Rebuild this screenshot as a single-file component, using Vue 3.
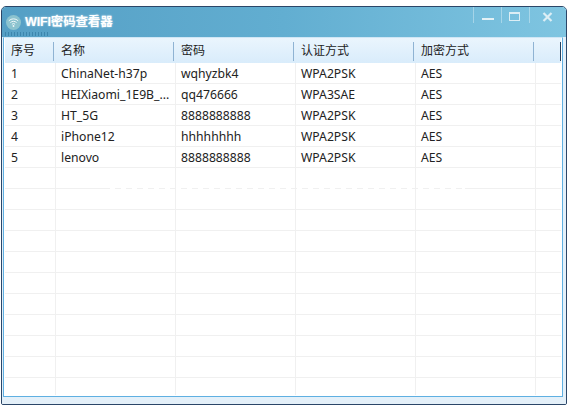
<template>
  <div class="win">
    <div class="title-bar">
      <svg class="app-icon" width="15" height="15" viewBox="0 0 15 15">
        <circle cx="7.5" cy="7.5" r="7.5" fill="#8cc3cf" />
        <path d="M2.8 5.8a6.6 6.6 0 0 1 9.4 0M4.4 7.6a4.4 4.4 0 0 1 6.2 0M5.9 9.3a2.2 2.2 0 0 1 3.2 0" fill="none" stroke="#eef7f8" stroke-width="1" />
        <circle cx="7.5" cy="11" r="0.9" fill="#eef7f8" />
      </svg>
      <span class="title">WIFI密码查看器</span>
      <div class="dots"></div>
      <div class="controls">
        <div class="ctl"><span class="min-bar"></span></div>
        <div class="ctl"><span class="max-box"></span></div>
        <div class="ctl last">
          <svg width="11" height="10" viewBox="0 0 11 10">
            <path d="M1.5 1l8 8M9.5 1l-8 8" stroke="#dceef5" stroke-width="2.2" fill="none" />
          </svg>
        </div>
      </div>
    </div>
    <div class="frame">
      <div class="panel">
        <div class="grid-row head">
          <div v-for="c in columns" :key="c" class="head-cell">{{ c }}</div>
          <div class="head-cell"></div>
          <span class="head-end"></span>
        </div>
        <div class="list">
          <div v-for="(r, i) in rows" :key="i" class="grid-row item">
            <div class="cell">{{ r[0] }}</div>
            <div class="cell">{{ r[1] }}</div>
            <div class="cell">{{ r[2] }}</div>
            <div class="cell">{{ r[3] }}</div>
            <div class="cell">{{ r[4] }}</div>
            <div class="cell"></div>
          </div>
          <div class="dash"></div>
        </div>
      </div>
    </div>
  </div>
</template>

<script setup>
const columns = ['序号', '名称', '密码', '认证方式', '加密方式']

const data = [
  ['1', 'ChinaNet-h37p', 'wqhyzbk4', 'WPA2PSK', 'AES'],
  ['2', 'HEIXiaomi_1E9B_...', 'qq476666', 'WPA3SAE', 'AES'],
  ['3', 'HT_5G', '8888888888', 'WPA2PSK', 'AES'],
  ['4', 'iPhone12', 'hhhhhhhh', 'WPA2PSK', 'AES'],
  ['5', 'lenovo', '8888888888', 'WPA2PSK', 'AES']
]

// 空行补满列表
const rows = [...data, ...Array.from({ length: 11 }, () => ['', '', '', '', ''])]
</script>

<style>
html, body {
  background: #fff;
}
</style>

<style scoped>
.win {
  box-sizing: border-box;
  width: 566px;
  height: 399px;
  margin: 6px 0 0 1px;
  border: 1px solid #2b4668;
  border-radius: 5px 5px 2px 2px;
  display: flex;
  flex-direction: column;
  overflow: hidden;
  font-family: "Noto Sans", "Noto Sans CJK SC", sans-serif;
  color: #222;
}
.title-bar {
  position: relative;
  height: 30px;
  flex: none;
  display: flex;
  align-items: flex-start;
  padding: 7px 0 0 4px;
  box-sizing: border-box;
  background: linear-gradient(90deg, #559fc5 0%, #62aed1 50%, #7fc5e1 100%);
}
.app-icon {
  margin-top: 1px;
}
.title {
  margin-left: 4px;
  font-family: "Liberation Sans", "Noto Sans CJK SC", sans-serif;
  font-size: 12.5px;
  line-height: 17px;
  font-weight: 700;
  letter-spacing: -0.15px;
  color: #fff;
  text-shadow: 0 0 2px rgba(255, 255, 255, 0.7);
}
.dots {
  position: absolute;
  left: 2px;
  top: 25px;
  width: 44px;
  height: 4px;
  background-image: radial-gradient(circle, #3d86ad 0.6px, transparent 0.7px);
  background-size: 3px 2px;
}
.controls {
  position: absolute;
  top: 0;
  right: 9px;
  display: flex;
}
.ctl {
  width: 28px;
  height: 16px;
  border-left: 1px solid rgba(255, 255, 255, 0.35);
  box-sizing: border-box;
  display: flex;
  justify-content: center;
  position: relative;
}
.ctl.last {
  padding: 5px 0 0 8px;
}
.min-bar {
  width: 12px;
  height: 2px;
  margin-top: 11px;
  background: #e3f1f6;
}
.max-box {
  width: 9px;
  height: 6px;
  margin: 5px 2px 0 0;
  border: 1px solid #dceef5;
  border-top-width: 2px;
}
.frame {
  flex: 1;
  min-height: 0;
  display: flex;
  background: #e4f0f9;
  padding: 0 3px 7px 1px;
}
.panel {
  flex: 1;
  min-width: 0;
  box-sizing: border-box;
  display: flex;
  flex-direction: column;
  background: #fff;
  border: 1px solid #5fb0e2;
  border-top-color: #cfe6f5;
  padding: 0 1px;
}
.grid-row {
  display: grid;
  grid-template-columns: 51px 120px 120px 120px 120px 25px;
}
.head {
  position: relative;
  height: 25px;
  flex: none;
  background: linear-gradient(180deg, #eaf5fd 0%, #d9ecfb 100%);
}
.head-cell {
  position: relative;
  padding-left: 5px;
  font-size: 12px;
  line-height: 25px;
}
.head-cell:first-child {
  padding-left: 6px;
}
.head-cell::after {
  content: "";
  position: absolute;
  right: 2px;
  top: 4px;
  height: 19px;
  width: 1px;
  background: #8fb3d3;
}
.head-cell:last-of-type::after {
  display: none;
}
.head-end {
  position: absolute;
  right: 0;
  top: 4px;
  width: 1px;
  height: 19px;
  background: #26405e;
}
.list {
  position: relative;
  flex: 1;
  min-height: 0;
  margin-bottom: 1px;
  overflow: hidden;
}
.item {
  height: 21px;
  box-sizing: border-box;
  border-bottom: 1px solid #f0f0f0;
}
.cell {
  box-sizing: border-box;
  padding-left: 5px;
  font-size: 12.2px;
  line-height: 22px;
  border-right: 1px solid #f0f0f0;
  white-space: nowrap;
  overflow: hidden;
}
.cell:first-child {
  padding-left: 6px;
}
.cell:last-child {
  border-right: none;
}
.dash {
  position: absolute;
  left: 105px;
  top: 125px;
  width: 355px;
  height: 1px;
  background: repeating-linear-gradient(90deg, #fff 0 5px, transparent 5px 11px);
}
</style>
